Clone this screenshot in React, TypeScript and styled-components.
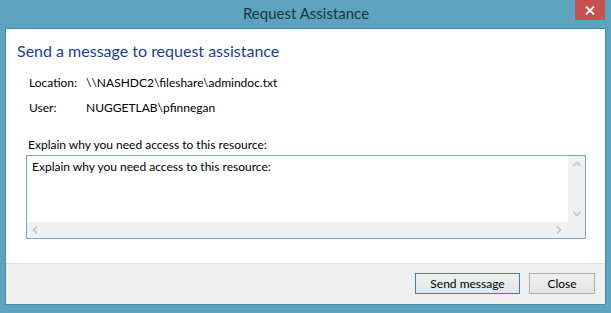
import styled, { createGlobalStyle } from 'styled-components'

const GlobalStyle = createGlobalStyle`
  html, body {
    margin: 0;
    padding: 0;
    background: #5ca3bf;
  }
  body {
    font-family: Lato, "Noto Sans", sans-serif;
  }
`

const Chevron = ({ dir }: { dir: 'up' | 'down' | 'left' | 'right' }) => {
  const paths = {
    up: 'M1.5 6 L5 2.5 L8.5 6',
    down: 'M1.5 3 L5 6.5 L8.5 3',
    left: 'M6 1.5 L2.5 5 L6 8.5',
    right: 'M3 1.5 L6.5 5 L3 8.5'
  }
  return (
    <svg width="10" height="10" viewBox="0 0 10 10">
      <path d={paths[dir]} fill="none" stroke="#c2c2c2" strokeWidth="1.6" />
    </svg>
  )
}

export default function App() {
  return (
    <>
      <GlobalStyle />
      <Window>
        <TitleBar>
          <Title>Request Assistance</Title>
          <CloseX>
            <svg width="10" height="9" viewBox="0 0 10 9">
              <path d="M1 0.5 L9 8.5 M9 0.5 L1 8.5" stroke="#fff" strokeWidth="1.8" />
            </svg>
          </CloseX>
        </TitleBar>
        <Client>
          <Content>
            <Heading>Send a message to request assistance</Heading>
            <InfoGrid>
              <InfoLabel>Location:</InfoLabel>
              <InfoValue>\\NASHDC2\fileshare\admindoc.txt</InfoValue>
              <InfoLabel>User:</InfoLabel>
              <InfoValue>NUGGETLAB\pfinnegan</InfoValue>
            </InfoGrid>
            <FieldLabel>Explain why you need access to this resource:</FieldLabel>
            <TextBox>
              <TextArea>Explain why you need access to this resource:</TextArea>
              <VScroll>
                <Chevron dir="up" />
                <Chevron dir="down" />
              </VScroll>
              <HScroll>
                <Chevron dir="left" />
                <Chevron dir="right" />
              </HScroll>
              <Corner />
            </TextBox>
          </Content>
          <Footer>
            <Button $primary>Send message</Button>
            <Button $width={66}>Close</Button>
          </Footer>
        </Client>
      </Window>
    </>
  )
}

const Window = styled.div`
  width: 611px;
  height: 313px;
  box-sizing: border-box;
  padding: 0 5px 8px 5px;
  display: flex;
  flex-direction: column;
  background: #5ca3bf;
`

const TitleBar = styled.div`
  height: 28px;
  position: relative;
  display: flex;
  justify-content: center;
  align-items: center;
  flex-shrink: 0;
`

const Title = styled.div`
  font-size: 15px;
  color: #1d3440;
  margin-top: -2px;
  margin-left: 1px;
`

const CloseX = styled.div`
  position: absolute;
  right: 1px;
  top: 0;
  width: 30px;
  height: 20px;
  background: #c75050;
  display: flex;
  align-items: center;
  justify-content: center;
`

const Client = styled.div`
  flex: 1;
  display: flex;
  flex-direction: column;
  background: #fff;
  border: 1px solid #4a8aa4;
  min-height: 0;
`

const Content = styled.div`
  flex: 1;
  padding: 11px 19px 0 11px;
  display: flex;
  flex-direction: column;
`

const Heading = styled.div`
  font-size: 16px;
  color: #1c3d8f;
  line-height: 22px;
`

const InfoGrid = styled.div`
  display: grid;
  grid-template-columns: 57px 1fr;
  row-gap: 7px;
  margin: 12px 0 0 12px;
  font-size: 12px;
  line-height: 18px;
  color: #000;
`

const InfoLabel = styled.div``

const InfoValue = styled.div``

const FieldLabel = styled.div`
  margin: 19px 0 0 11px;
  font-size: 12px;
  line-height: 18px;
  color: #000;
`

const TextBox = styled.div`
  margin: 1px 0 0 9px;
  height: 84px;
  box-sizing: border-box;
  border: 1px solid #7aa7cc;
  display: grid;
  grid-template-columns: 1fr 17px;
  grid-template-rows: 1fr 16px;
`

const TextArea = styled.div`
  padding: 2px 5px;
  font-size: 12px;
  line-height: 18px;
  color: #000;
`

const VScroll = styled.div`
  background: #f0f0f0;
  display: flex;
  flex-direction: column;
  justify-content: space-between;
  align-items: center;
  padding: 4px 0 3px;
`

const HScroll = styled.div`
  background: #f0f0f0;
  display: flex;
  justify-content: space-between;
  align-items: center;
  padding: 0 4px 0 4px;
`

const Corner = styled.div`
  background: #f0f0f0;
`

const Footer = styled.div`
  height: 41px;
  box-sizing: border-box;
  flex-shrink: 0;
  background: #f0f0f0;
  border-top: 1px solid #dfdfdf;
  display: flex;
  justify-content: flex-end;
  align-items: flex-start;
  gap: 9px;
  padding: 9px 10px 0 0;
`

const Button = styled.div<{ $primary?: boolean; $width?: number }>`
  box-sizing: border-box;
  width: ${(p) => (p.$width ? `${p.$width}px` : '105px')};
  height: 21px;
  border: 1px solid ${(p) => (p.$primary ? '#3c7fb1' : '#acacac')};
  background: linear-gradient(#f0f0f0, #e5e5e5);
  display: flex;
  align-items: center;
  justify-content: center;
  font-size: 12px;
  color: #000;
`
